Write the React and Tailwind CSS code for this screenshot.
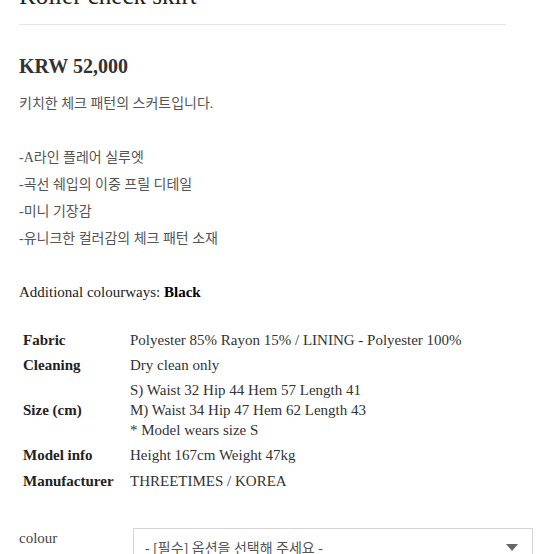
const serif = { fontFamily: '"Liberation Serif", "Noto Sans CJK KR", serif' };

const specs = [
  { label: 'Fabric', value: ['Polyester 85% Rayon 15% / LINING - Polyester 100%'] },
  { label: 'Cleaning', value: ['Dry clean only'] },
  {
    label: 'Size (cm)',
    value: ['S) Waist 32 Hip 44 Hem 57 Length 41', 'M) Waist 34 Hip 47 Hem 62 Length 43', '* Model wears size S'],
  },
  { label: 'Model info', value: ['Height 167cm Weight 47kg'] },
  { label: 'Manufacturer', value: ['THREETIMES / KOREA'] },
];

const bullets = ['-A라인 플레어 실루엣', '-곡선 쉐입의 이중 프릴 디테일', '-미니 기장감', '-유니크한 컬러감의 체크 패턴 소재'];

export default function App() {
  return (
    <div className="w-[554px] h-[554px] overflow-hidden bg-white text-[#333]" style={serif}>
      <div className="pl-[19px] pr-[48px]">
        <h1 className="-mt-[19px] text-[25px] leading-[30px] text-[#222] pb-[13px] border-b border-[#e5e5e5]">
          Roller check skirt
        </h1>
      </div>

      <div className="px-[19px]">
        <div className="mt-[29px] text-[20px] leading-[24px] font-bold text-[#333]">KRW 52,000</div>

        <div className="mt-[12px] text-[14px] leading-[27px] text-[#555]">
          <p>키치한 체크 패턴의 스커트입니다.</p>
          <p className="h-[27px]" />
          {bullets.map((b) => (
            <p key={b}>{b}</p>
          ))}
          <p className="h-[27px]" />
          <p className="text-[15px] text-[#222]">
            Additional colourways: <span className="font-bold text-black">Black</span>
          </p>
        </div>

        <table className="mt-[21px] text-[15px] leading-[20px] text-[#333] border-collapse">
          <tbody>
            {specs.map((s, i) => (
              <tr key={s.label}>
                <td
                  className={`w-[111px] pl-[4px] font-bold text-[#222] align-middle ${i > 2 ? 'py-[3px]' : 'py-[2.5px]'}`}
                >
                  {s.label}
                </td>
                <td className={`align-middle ${i > 2 ? 'py-[3px]' : 'py-[2.5px]'}`}>
                  {s.value.map((v) => (
                    <div key={v}>{v}</div>
                  ))}
                </td>
              </tr>
            ))}
          </tbody>
        </table>

        <div className="mt-[34px] flex items-start">
          <div className="w-[114px] text-[15px] leading-[20px] text-[#444]">colour</div>
          <div className="flex-1 mr-[2px] h-[40px] border border-[#d5d5d5] flex items-center justify-between pl-[11px] pr-[14px]">
            <span className="text-[14px] text-[#555]">- [필수] 옵션을 선택해 주세요 -</span>
            <svg width="12" height="8" viewBox="0 0 12 8">
              <path d="M0 0 L12 0 L6 7 Z" fill="#666" />
            </svg>
          </div>
        </div>
      </div>
    </div>
  );
}
